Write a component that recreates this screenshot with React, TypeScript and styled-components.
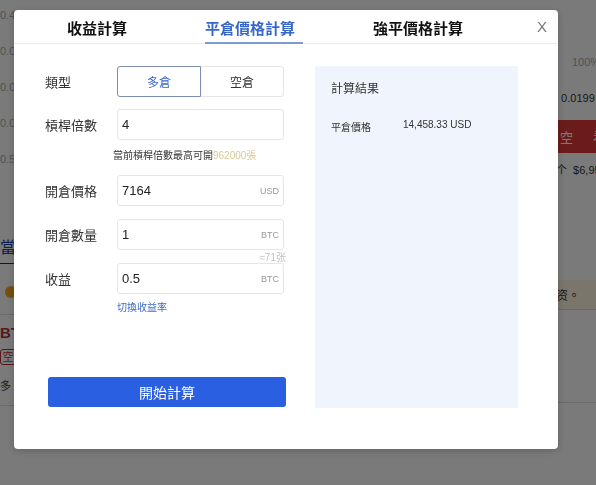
import styled, { createGlobalStyle } from "styled-components";

const GlobalStyle = createGlobalStyle`
  html, body {
    margin: 0;
    padding: 0;
    width: 596px;
    height: 485px;
    overflow: hidden;
    font-family: "Liberation Sans", "Noto Sans CJK TC", sans-serif;
    background: #fff;
  }
  * { box-sizing: border-box; }
`;

const BgPage = styled.div`
  width: 596px;
  height: 485px;
  display: grid;
  grid-template-columns: 60px 1fr 96px;
  background: #fff;
  overflow: hidden;
`;

const BgLeft = styled.div`
  display: flex;
  flex-direction: column;
  padding-top: 6px;
  color: #999;
  font-size: 11px;
`;

const BgRight = styled.div`
  display: flex;
  flex-direction: column;
  font-size: 12px;
`;

const BgNum = styled.div<{ $mt?: number }>`
  margin-top: ${(p) => p.$mt ?? 0}px;
  height: 18px;
  line-height: 18px;
  color: #aaa;
  white-space: nowrap;
`;

const BgTab = styled.div`
  margin-top: 65px;
  height: 31px;
  line-height: 30px;
  font-size: 16px;
  color: #1c3fa8;
  border-bottom: 1px solid #333;
  margin-right: 12px;
`;

const BgNotice = styled.div`
  height: 51px;
  display: flex;
  align-items: center;
  padding-left: 5px;
  padding-top: 6px;
  border-bottom: 1px solid #ddd;
`;

const BgDot = styled.span`
  width: 12px;
  height: 12px;
  border-radius: 50%;
  background: #f5a623;
`;

const BgCoin = styled.div`
  margin-top: 9px;
  font-size: 15px;
  font-weight: bold;
  color: #b33;
`;

const BgTag = styled.span`
  margin-top: 8px;
  width: 16px;
  height: 16px;
  font-size: 11px;
  line-height: 14px;
  text-align: center;
  color: #b33;
  border: 1px solid #b33;
  border-radius: 3px;
`;

const BgSmall = styled.div<{ $mt?: number; $pl?: number; $color?: string }>`
  margin-top: ${(p) => p.$mt ?? 0}px;
  padding-left: ${(p) => p.$pl ?? 0}px;
  color: ${(p) => p.$color ?? "#333"};
  font-size: 11px;
  white-space: nowrap;
`;

const BgLine = styled.div<{ $mt?: number }>`
  margin-top: ${(p) => p.$mt ?? 0}px;
  border-top: 1px solid #ddd;
`;

const BgRedBar = styled.div`
  margin-top: 16px;
  height: 33px;
  background: #e03a3a;
  color: #fff;
  display: flex;
  align-items: center;
  gap: 20px;
  padding-left: 60px;
  font-size: 13px;
`;

const BgYellow = styled.div`
  margin-top: 103px;
  height: 30px;
  background: #fff6df;
  display: flex;
  align-items: center;
  padding-left: 56px;
  color: #333;
  font-size: 12px;
  border-bottom: 1px solid #ddd;
`;

const Overlay = styled.div`
  position: fixed;
  inset: 0;
  background: rgba(0, 0, 0, 0.52);
  padding: 10px 0 0 14px;
`;

const Modal = styled.div`
  width: 544px;
  height: 439px;
  background: #fff;
  border-radius: 4px;
  box-shadow: 0 2px 8px rgba(0, 0, 0, 0.2);
  display: flex;
  flex-direction: column;
`;

const Header = styled.div`
  height: 34px;
  display: flex;
  align-items: stretch;
  padding-left: 53px;
  border-bottom: 1px solid #ececec;
`;

const Tabs = styled.div`
  display: flex;
  gap: 78px;
`;

const Tab = styled.div<{ $active?: boolean }>`
  position: relative;
  display: flex;
  align-items: center;
  white-space: nowrap;
  font-size: 15px;
  font-weight: bold;
  color: ${(p) => (p.$active ? "#3768c8" : "#111")};
  padding-top: 2px;
  &::after {
    content: "";
    display: ${(p) => (p.$active ? "block" : "none")};
    position: absolute;
    left: 0;
    right: -8px;
    bottom: -1px;
    height: 2px;
    background: #7d9bd3;
  }
`;

const Close = styled.div`
  margin-left: auto;
  margin-right: 11px;
  display: flex;
  align-items: center;
  font-size: 15px;
  color: #777;
  font-family: "Liberation Sans", sans-serif;
`;

const Body = styled.div`
  display: flex;
  padding: 22px 0 0 31px;
`;

const Form = styled.div`
  width: 270px;
  display: flex;
  flex-direction: column;
`;

const Field = styled.div<{ $mt?: number }>`
  display: flex;
  align-items: center;
  height: 31px;
  margin-top: ${(p) => p.$mt ?? 0}px;
`;

const Label = styled.div`
  width: 72px;
  font-size: 13px;
  color: #333;
`;

const Segmented = styled.div`
  width: 167px;
  height: 31px;
  display: flex;
`;

const Segment = styled.div<{ $active?: boolean }>`
  flex: 1;
  display: flex;
  align-items: center;
  justify-content: center;
  font-size: 12px;
  color: ${(p) => (p.$active ? "#3a6acb" : "#333")};
  border: 1px solid ${(p) => (p.$active ? "#7b8db3" : "#e6e6e6")};
  border-radius: ${(p) => (p.$active ? "3px 0 0 3px" : "0 3px 3px 0")};
  ${(p) => (p.$active ? "" : "border-left: none;")}
`;

const InputBox = styled.div`
  width: 167px;
  height: 31px;
  display: flex;
  align-items: center;
  justify-content: space-between;
  border: 1px solid #e6e6e6;
  border-radius: 3px;
  padding: 0 4px;
`;

const Value = styled.span`
  font-size: 13px;
  color: #222;
`;

const Unit = styled.span`
  font-size: 9px;
  color: #999;
`;

const Hint = styled.div<{ $mt?: number; $ml?: number; $align?: string }>`
  margin-top: ${(p) => p.$mt ?? 0}px;
  margin-left: ${(p) => p.$ml ?? 0}px;
  width: ${(p) => (p.$align === "right" ? "241px" : "auto")};
  text-align: ${(p) => p.$align ?? "left"};
  font-size: 10px;
  line-height: 12px;
  color: #333;
`;

const Gold = styled.span`
  color: #d8c896;
`;

const Muted = styled.span`
  color: #c2c2c2;
`;

const Link = styled.div`
  margin-top: 8px;
  margin-left: 72px;
  font-size: 10px;
  line-height: 12px;
  color: #3d6cc4;
`;

const Submit = styled.button`
  margin-top: 63px;
  margin-left: 3px;
  width: 238px;
  height: 30px;
  border: none;
  border-radius: 3px;
  background: #2a5fe1;
  color: #fff;
  font-size: 14px;
  font-family: "Liberation Sans", "Noto Sans CJK TC", sans-serif;
`;

const Result = styled.div`
  width: 203px;
  height: 342px;
  background: #f0f4fc;
  padding: 16px 16px;
`;

const ResultTitle = styled.div`
  font-size: 12px;
  color: #333;
  line-height: 14px;
`;

const ResultRow = styled.div`
  margin-top: 23px;
  display: flex;
  font-size: 10px;
  color: #333;
`;

const ResultKey = styled.span`
  width: 72px;
`;

export default function App() {
  return (
    <>
      <GlobalStyle />
      <BgPage>
        <BgLeft>
          <BgNum>0.4527</BgNum>
          <BgNum $mt={18}>0.0000</BgNum>
          <BgNum $mt={18}>0.0000</BgNum>
          <BgNum $mt={18}>0.0000</BgNum>
          <BgNum $mt={18}>0.5100</BgNum>
          <BgTab>當前</BgTab>
          <BgNotice>
            <BgDot />
          </BgNotice>
          <BgCoin>BTC</BgCoin>
          <BgTag>空</BgTag>
          <BgSmall $mt={12}>多 帳</BgSmall>
          <BgLine $mt={12} />
        </BgLeft>
        <div />
        <BgRight>
          <BgSmall $mt={56} $pl={72} $color="#aaa">100%</BgSmall>
          <BgSmall $mt={24} $pl={55}>: 0.0199</BgSmall>
          <BgRedBar>
            <span>空</span>
            <span>看</span>
          </BgRedBar>
          <BgSmall $mt={8} $pl={56}>个&nbsp;&nbsp;$6,95</BgSmall>
          <BgYellow>资。</BgYellow>
          <BgLine $mt={92} />
        </BgRight>
      </BgPage>
      <Overlay>
        <Modal>
          <Header>
            <Tabs>
              <Tab>收益計算</Tab>
              <Tab $active>平倉價格計算</Tab>
              <Tab>強平價格計算</Tab>
            </Tabs>
            <Close>X</Close>
          </Header>
          <Body>
            <Form>
              <Field>
                <Label>類型</Label>
                <Segmented>
                  <Segment $active>多倉</Segment>
                  <Segment>空倉</Segment>
                </Segmented>
              </Field>
              <Field $mt={12}>
                <Label>槓桿倍數</Label>
                <InputBox>
                  <Value>4</Value>
                </InputBox>
              </Field>
              <Hint $mt={10} $ml={68}>
                當前槓桿倍數最高可開<Gold>962000張</Gold>
              </Hint>
              <Field $mt={13}>
                <Label>開倉價格</Label>
                <InputBox>
                  <Value>7164</Value>
                  <Unit>USD</Unit>
                </InputBox>
              </Field>
              <Field $mt={13}>
                <Label>開倉數量</Label>
                <InputBox>
                  <Value>1</Value>
                  <Unit>BTC</Unit>
                </InputBox>
              </Field>
              <Hint $mt={2} $align="right">
                <Muted>≈71张</Muted>
              </Hint>
              <Field $mt={-1}>
                <Label>收益</Label>
                <InputBox>
                  <Value>0.5</Value>
                  <Unit>BTC</Unit>
                </InputBox>
              </Field>
              <Link>切換收益率</Link>
              <Submit>開始計算</Submit>
            </Form>
            <Result>
              <ResultTitle>計算結果</ResultTitle>
              <ResultRow>
                <ResultKey>平倉價格</ResultKey>
                <span>14,458.33 USD</span>
              </ResultRow>
            </Result>
          </Body>
        </Modal>
      </Overlay>
    </>
  );
}
